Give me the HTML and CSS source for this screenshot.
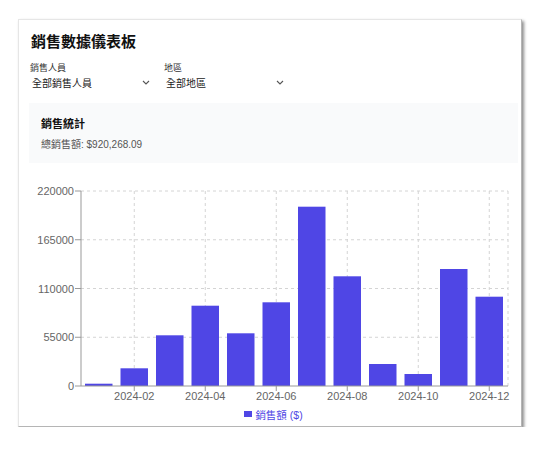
FILE: index.html
```html
<!DOCTYPE html>
<html lang="zh-Hant">
<head>
  <meta charset="UTF-8">
  <meta name="viewport" content="width=device-width, initial-scale=1.0">
  <title>銷售數據儀表板</title>
  <link rel="stylesheet" href="styles.css">
</head>
<body>
  <div class="card">
    <h1>銷售數據儀表板</h1>

    <!-- Filters -->
    <div class="filters">
      <div class="filter">
        <label>銷售人員</label>
        <div class="select">
          <span>全部銷售人員</span>
          <svg class="chevron" viewBox="0 0 8 5" width="8" height="5"><path d="M1 1l3 3 3-3"/></svg>
        </div>
      </div>
      <div class="filter">
        <label>地區</label>
        <div class="select">
          <span>全部地區</span>
          <svg class="chevron" viewBox="0 0 8 5" width="8" height="5"><path d="M1 1l3 3 3-3"/></svg>
        </div>
      </div>
    </div>

    <!-- Stats -->
    <div class="stats">
      <h2>銷售統計</h2>
      <p>總銷售額: $920,268.09</p>
    </div>

    <!-- Chart -->
    <svg class="chart" width="489" height="226" viewBox="0 0 489 226">
      <g class="grid">
        <line x1="52" y1="13" x2="479" y2="13"/>
        <line x1="52" y1="61.75" x2="479" y2="61.75"/>
        <line x1="52" y1="110.5" x2="479" y2="110.5"/>
        <line x1="52" y1="159.25" x2="479" y2="159.25"/>
        <line x1="105.25" y1="13" x2="105.25" y2="208"/>
        <line x1="176.25" y1="13" x2="176.25" y2="208"/>
        <line x1="247.25" y1="13" x2="247.25" y2="208"/>
        <line x1="318.25" y1="13" x2="318.25" y2="208"/>
        <line x1="389.25" y1="13" x2="389.25" y2="208"/>
        <line x1="460.25" y1="13" x2="460.25" y2="208"/>
        <line x1="479" y1="13" x2="479" y2="208"/>
      </g>
      <g class="bars">
        <rect x="56" y="205.7" width="27.5" height="2.3"/>
        <rect x="91.5" y="190.3" width="27.5" height="17.7"/>
        <rect x="127" y="157.3" width="27.5" height="50.7"/>
        <rect x="162.5" y="127.7" width="27.5" height="80.3"/>
        <rect x="198" y="155.3" width="27.5" height="52.7"/>
        <rect x="233.5" y="124.3" width="27.5" height="83.7"/>
        <rect x="269" y="28.7" width="27.5" height="179.3"/>
        <rect x="304.5" y="98.3" width="27.5" height="109.7"/>
        <rect x="340" y="186" width="27.5" height="22"/>
        <rect x="375.5" y="196" width="27.5" height="12"/>
        <rect x="411" y="91" width="27.5" height="117"/>
        <rect x="446.5" y="118.7" width="27.5" height="89.3"/>
      </g>
      <g class="axis">
        <line x1="52" y1="13" x2="52" y2="208"/>
        <line x1="52" y1="208" x2="479" y2="208"/>
        <line x1="46" y1="13" x2="52" y2="13"/>
        <line x1="46" y1="61.75" x2="52" y2="61.75"/>
        <line x1="46" y1="110.5" x2="52" y2="110.5"/>
        <line x1="46" y1="159.25" x2="52" y2="159.25"/>
        <line x1="46" y1="208" x2="52" y2="208"/>
        <line x1="105.25" y1="208" x2="105.25" y2="213"/>
        <line x1="176.25" y1="208" x2="176.25" y2="213"/>
        <line x1="247.25" y1="208" x2="247.25" y2="213"/>
        <line x1="318.25" y1="208" x2="318.25" y2="213"/>
        <line x1="389.25" y1="208" x2="389.25" y2="213"/>
        <line x1="460.25" y1="208" x2="460.25" y2="213"/>
      </g>
      <g class="ylabels">
        <text x="45" y="17">220000</text>
        <text x="45" y="65.75">165000</text>
        <text x="45" y="114.5">110000</text>
        <text x="45" y="163.25">55000</text>
        <text x="45" y="212">0</text>
      </g>
      <g class="xlabels">
        <text x="105.25" y="222">2024-02</text>
        <text x="176.25" y="222">2024-04</text>
        <text x="247.25" y="222">2024-06</text>
        <text x="318.25" y="222">2024-08</text>
        <text x="389.25" y="222">2024-10</text>
        <text x="460.25" y="222">2024-12</text>
      </g>
    </svg>

    <div class="legend">
      <span class="swatch"></span>
      <span>銷售額 ($)</span>
    </div>
  </div>
</body>
</html>
```

FILE: styles.css
```css
body { margin: 0; padding: 19px 0 0 18px; background: #fff; font-family: "Liberation Sans", "Noto Sans CJK TC", sans-serif; color: #222; }
.card { width: 489px; height: 392px; padding: 12px 3px 2px 10px; background: #fff; border: 1px solid #e6e6e6; border-right-color: #b5b5b5; border-bottom-color: #b5b5b5; box-shadow: 2px 2px 3px rgba(0,0,0,0.45); }
h1 { margin: 0 0 10px 2px; font-size: 15px; line-height: 20px; font-weight: bold; color: #111; }
.filters { display: flex; gap: 8px; }
.filter { width: 126px; }
.filter label { display: block; font-size: 9px; line-height: 12px; color: #333; padding-left: 1px; }
.select { display: flex; align-items: center; justify-content: space-between; height: 16px; padding: 0 5px 0 3px; font-size: 10px; color: #222; }
.chevron { fill: none; stroke: #555; stroke-width: 1.1; }
.stats { margin-top: 13px; height: 60px; box-sizing: border-box; padding: 13px 12px 0; background: #f9fafb; }
.stats h2 { margin: 0; font-size: 11px; line-height: 16px; font-weight: bold; color: #111; }
.stats p { margin: 6px 0 0; font-size: 10px; line-height: 14px; color: #555; }
.chart { display: block; margin-top: 15px; font-family: "Liberation Sans", sans-serif; }
.grid line { stroke: #d4d4d4; stroke-width: 1; stroke-dasharray: 3 3; }
.axis line { stroke: #999; stroke-width: 1; }
.bars rect { fill: #4f46e5; }
.ylabels text { font-size: 11px; fill: #666; text-anchor: end; }
.xlabels text { font-size: 11px; fill: #666; text-anchor: middle; }
.legend { display: flex; justify-content: center; align-items: center; gap: 3px; height: 20px; font-size: 10.5px; color: #4f46e5; }
.swatch { width: 8px; height: 6px; background: #4f46e5; }
```
